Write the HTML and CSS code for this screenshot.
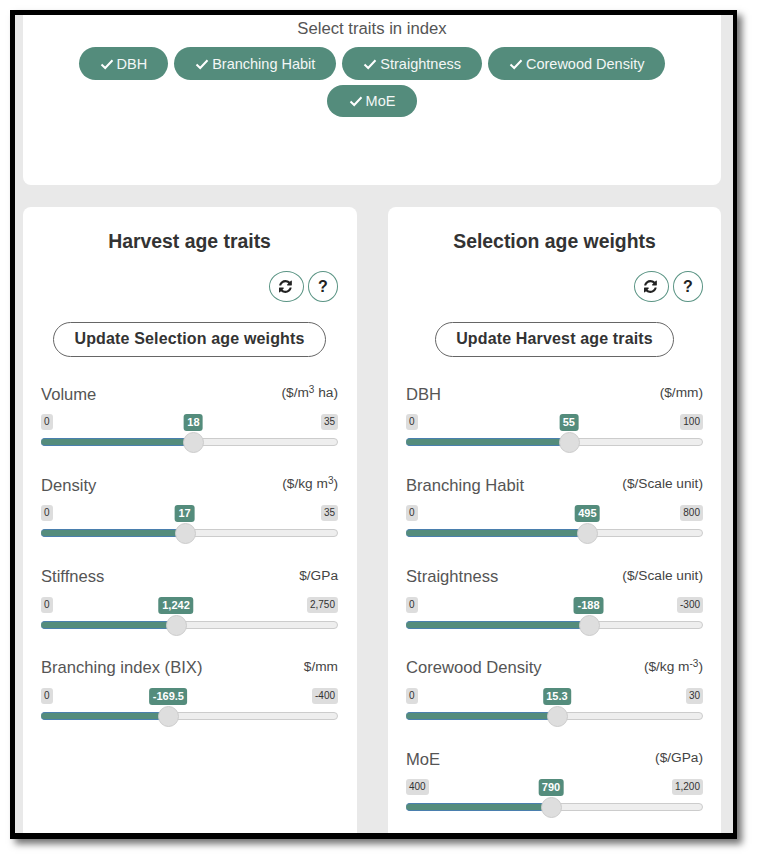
FILE: index.html
```html
<!DOCTYPE html>
<html lang="en">
<head>
<meta charset="utf-8">
<title>Trait index</title>
<link rel="stylesheet" href="styles.css">
</head>
<body>
<svg class="defs" aria-hidden="true">
  <symbol id="i-check" viewBox="0 0 14 14"><path d="M1.5 7.5 5.2 11 12.5 3.2"/></symbol>
  <symbol id="i-refresh" viewBox="0 0 1792 1792"><path d="M1511 1056q0 5-1 7-64 268-268 434.5t-478 166.5q-146 0-282.5-55t-243.5-157l-129 129q-19 19-45 19t-45-19-19-45v-448q0-26 19-45t45-19h448q26 0 45 19t19 45-19 45l-137 137q71 66 161 102t187 36q134 0 250-65t186-179q11-17 53-117 8-23 30-23h192q13 0 22.5 9.5t9.5 22.5zm25-800v448q0 26-19 45t-45 19h-448q-26 0-45-19t-19-45 19-45l138-138q-148-137-349-137-134 0-250 65t-186 179q-11 17-53 117-8 23-30 23h-199q-13 0-22.5-9.5t-9.5-22.5v-7q65-268 270-434.5t480-166.5q146 0 284 55.5t245 156.5l130-129q19-19 45-19t45 19 19 45z"/></symbol>
</svg>
<div class="frame">
  <section class="card top">
    <p class="select-title">Select traits in index</p>
    <div class="chips">
      <span class="chip"><svg class="check"><use href="#i-check"/></svg>DBH</span>
      <span class="chip"><svg class="check"><use href="#i-check"/></svg>Branching Habit</span>
      <span class="chip"><svg class="check"><use href="#i-check"/></svg>Straightness</span>
      <span class="chip"><svg class="check"><use href="#i-check"/></svg>Corewood Density</span>
      <span class="chip chip-short"><svg class="check"><use href="#i-check"/></svg>MoE</span>
    </div>
  </section>
  <div class="columns">
    <section class="card panel">
      <h2>Harvest age traits</h2>
      <div class="tools">
        <button class="round wide"><svg class="refresh"><use href="#i-refresh"/></svg></button>
        <button class="round">?</button>
      </div>
      <div class="update-row"><button class="update">Update Selection age weights</button></div>
      <div class="row">
        <div class="head"><span class="name">Volume</span><span class="unit">($/m<sup>3</sup> ha)</span></div>
        <div class="limits"><span class="limit">0</span><span class="limit">35</span></div>
        <div class="track"><div class="fill" style="width:51.5%"><span class="bubble">18</span><span class="handle"></span></div></div>
      </div>
      <div class="row">
        <div class="head"><span class="name">Density</span><span class="unit">($/kg m<sup>3</sup>)</span></div>
        <div class="limits"><span class="limit">0</span><span class="limit">35</span></div>
        <div class="track"><div class="fill" style="width:48.5%"><span class="bubble">17</span><span class="handle"></span></div></div>
      </div>
      <div class="row">
        <div class="head"><span class="name">Stiffness</span><span class="unit">$/GPa</span></div>
        <div class="limits"><span class="limit">0</span><span class="limit">2,750</span></div>
        <div class="track"><div class="fill" style="width:45.6%"><span class="bubble">1,242</span><span class="handle"></span></div></div>
      </div>
      <div class="row">
        <div class="head"><span class="name">Branching index (BIX)</span><span class="unit">$/mm</span></div>
        <div class="limits"><span class="limit">0</span><span class="limit">-400</span></div>
        <div class="track"><div class="fill" style="width:43%"><span class="bubble">-169.5</span><span class="handle"></span></div></div>
      </div>
    </section>
    <section class="card panel">
      <h2>Selection age weights</h2>
      <div class="tools">
        <button class="round wide"><svg class="refresh"><use href="#i-refresh"/></svg></button>
        <button class="round">?</button>
      </div>
      <div class="update-row"><button class="update">Update Harvest age traits</button></div>
      <div class="row">
        <div class="head"><span class="name">DBH</span><span class="unit">($/mm)</span></div>
        <div class="limits"><span class="limit">0</span><span class="limit">100</span></div>
        <div class="track"><div class="fill" style="width:55%"><span class="bubble">55</span><span class="handle"></span></div></div>
      </div>
      <div class="row">
        <div class="head"><span class="name">Branching Habit</span><span class="unit">($/Scale unit)</span></div>
        <div class="limits"><span class="limit">0</span><span class="limit">800</span></div>
        <div class="track"><div class="fill" style="width:61.3%"><span class="bubble">495</span><span class="handle"></span></div></div>
      </div>
      <div class="row">
        <div class="head"><span class="name">Straightness</span><span class="unit">($/Scale unit)</span></div>
        <div class="limits"><span class="limit">0</span><span class="limit">-300</span></div>
        <div class="track"><div class="fill" style="width:61.7%"><span class="bubble">-188</span><span class="handle"></span></div></div>
      </div>
      <div class="row">
        <div class="head"><span class="name">Corewood Density</span><span class="unit">($/kg m<sup>-3</sup>)</span></div>
        <div class="limits"><span class="limit">0</span><span class="limit">30</span></div>
        <div class="track"><div class="fill" style="width:51%"><span class="bubble">15.3</span><span class="handle"></span></div></div>
      </div>
      <div class="row">
        <div class="head"><span class="name">MoE</span><span class="unit">($/GPa)</span></div>
        <div class="limits"><span class="limit">400</span><span class="limit">1,200</span></div>
        <div class="track"><div class="fill" style="width:49%"><span class="bubble">790</span><span class="handle"></span></div></div>
      </div>
    </section>
  </div>
</div>
</body>
</html>
```
FILE: styles.css
```css
* { box-sizing: border-box; }
html, body { margin: 0; padding: 0; background: #fff; }
body {
  width: 762px;
  height: 863px;
  overflow: hidden;
  padding: 10px 0 0 10px;
  font-family: "Liberation Sans", Arial, sans-serif;
  color: #333;
}
.defs { display: none; }
.frame {
  width: 727px;
  height: 829px;
  border: solid #000;
  border-width: 5px 4px 6px 5px;
  background: #e9e9e9;
  box-shadow: 5px 5px 7px rgba(0, 0, 0, 0.55);
  padding: 0 12px 0 8px;
  overflow: hidden;
}
.card { background: #fff; border-radius: 8px; }
.top {
  height: 170px;
  border-radius: 0 0 8px 8px;
  padding-top: 5px;
}
.select-title {
  margin: 0;
  height: 18px;
  line-height: 18px;
  text-align: center;
  font-size: 16.7px;
  color: #555;
}
.chips {
  margin-top: 9px;
  padding: 0 50px;
  display: flex;
  flex-wrap: wrap;
  justify-content: center;
  gap: 5px 6px;
}
.chip {
  display: inline-flex;
  align-items: center;
  height: 33px;
  padding: 0 21px;
  border-radius: 17px;
  background: #548c7c;
  color: #f3f7f6;
  font-size: 14.5px;
}
.chip-short { height: 32px; padding: 0 21.5px; }
.check {
  width: 14px;
  height: 14px;
  margin-right: 3px;
  fill: none;
  stroke: #fff;
  stroke-width: 2;
}
.columns {
  margin-top: 22px;
  display: flex;
  justify-content: space-between;
}
.panel {
  width: 334px;
  height: 680px;
  padding: 22px 19px 0 18px;
}
.panel:last-child { width: 333px; padding-right: 18px; }
h2 {
  margin: 0;
  height: 24px;
  line-height: 24px;
  text-align: center;
  font-size: 19.4px;
  font-weight: 700;
  color: #333;
}
.tools {
  margin-top: 18px;
  display: flex;
  justify-content: flex-end;
  gap: 4px;
}
.round {
  width: 30px;
  height: 31px;
  padding: 0;
  border: 1px solid #5a9484;
  border-radius: 50%;
  background: #fff;
  color: #222;
  font: 700 16px "Liberation Sans", Arial, sans-serif;
  display: flex;
  align-items: center;
  justify-content: center;
}
.wide { width: 35px; }
.refresh { width: 15px; height: 15px; fill: #222; }
.update-row { margin-top: 20px; display: flex; justify-content: center; }
.update {
  height: 35px;
  padding: 0 20px 1px;
  border: 1px solid #666;
  border-radius: 18px;
  background: #fff;
  color: #333;
  font: 700 16px "Liberation Sans", Arial, sans-serif;
  letter-spacing: 0.15px;
}
.row { margin-bottom: 28.33px; }
.update-row + .row { margin-top: 26px; }
.head {
  height: 22px;
  display: flex;
  justify-content: space-between;
  align-items: center;
}
.name { font-size: 16.6px; color: #555; padding-top: 1px; }
.unit { font-size: 13.7px; color: #444; margin-top: -3px; }
sup { font-size: 10px; line-height: 0; vertical-align: 4px; }
.limits {
  margin-top: 9px;
  height: 17px;
  display: flex;
  justify-content: space-between;
}
.limit {
  height: 16px;
  line-height: 15px;
  padding: 0 3px;
  border-radius: 3px;
  background: #ddd;
  color: #333;
  font-size: 10px;
}
.track {
  margin-top: 7px;
  height: 8px;
  border: 1px solid #ccc;
  border-radius: 4px;
  background: #eee;
}
.fill {
  position: relative;
  height: 8px;
  margin: -1px 0 0 -1px;
  border-top: 1px solid #4a7fae;
  border-bottom: 1px solid #4a7fae;
  border-radius: 4px 0 0 4px;
  background: #548c7c;
}
.bubble {
  position: absolute;
  right: -0.5px;
  top: -25px;
  transform: translateX(50%);
  height: 17px;
  line-height: 17px;
  padding: 0 3.5px;
  border-radius: 3px;
  background: #548c7c;
  color: #fff;
  font-size: 11px;
  font-weight: 700;
  white-space: nowrap;
}
.handle {
  position: absolute;
  right: -11.5px;
  top: -7px;
  width: 21px;
  height: 21px;
  border: 1px solid #ccc;
  border-radius: 50%;
  background: #dedede;
}
```
